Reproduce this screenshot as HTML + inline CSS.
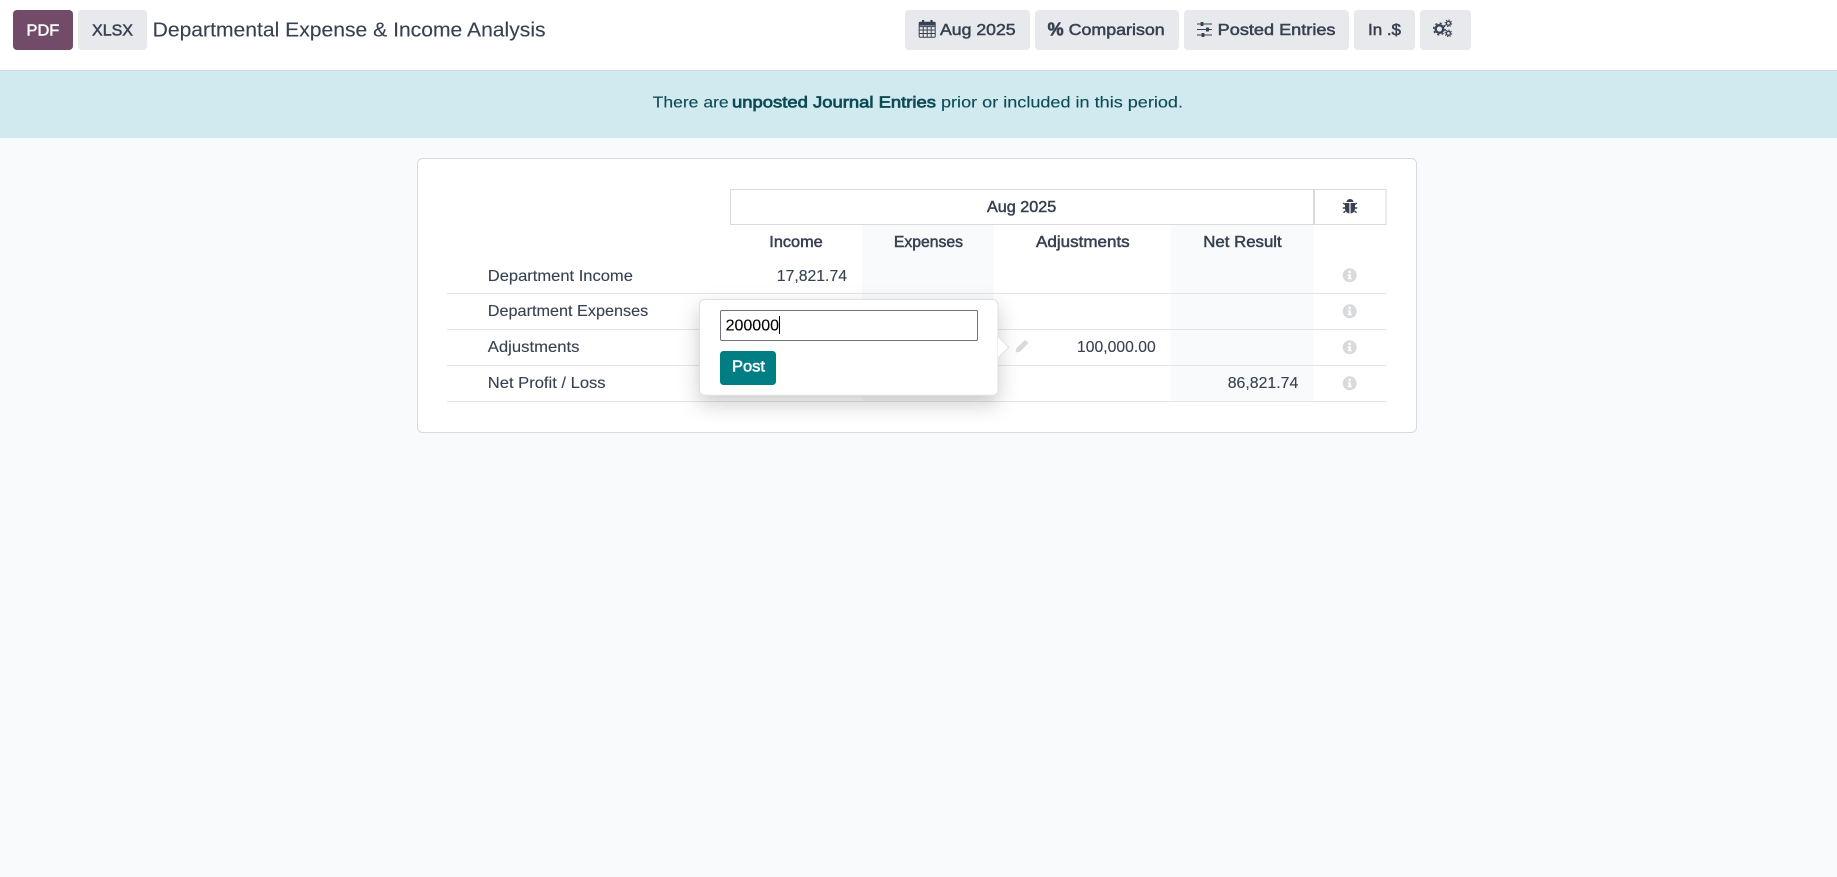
<!DOCTYPE html>
<html lang="en">
<head>
<meta charset="utf-8">
<title>Departmental Expense &amp; Income Analysis</title>
<style>
html,body{margin:0;padding:0;width:1837px;height:877px;overflow:hidden;background:#f9fafb}
svg{display:block}
text{font-family:"Liberation Sans",Arial,sans-serif;font-size:16px;fill:#374151;white-space:pre;stroke:#374151;stroke-width:.12px}
text.m{stroke:#374151;stroke-width:.5px}
text.a{fill:#0c4a55;stroke:#0c4a55}
</style>
</head>
<body>
<svg width="1837" height="877" viewBox="0 0 1837 877" xmlns="http://www.w3.org/2000/svg">
<defs>
<filter id="sh" x="-25%" y="-40%" width="150%" height="200%"><feDropShadow dx="0" dy="8" stdDeviation="10" flood-color="#000" flood-opacity=".2"/></filter>
</defs>
<rect width="1837" height="877" fill="#f9fafb"/>

<!-- control panel -->
<rect width="1837" height="70" fill="#fff"/>
<rect y="70" width="1837" height="1" fill="#d8dadd"/>
<rect x="13" y="10" width="60" height="40" rx="4" fill="#714b67"/>
<text x="26.5" y="35.500" textLength="32.8" lengthAdjust="spacingAndGlyphs" style="fill:#fff;stroke:#fff;stroke-width:.5px">PDF</text>
<rect x="78" y="10" width="69" height="40" rx="4" fill="#e7e9ed"/>
<text class="m" x="92" y="35.500" textLength="41" lengthAdjust="spacingAndGlyphs">XLSX</text>
<text x="152.6" y="36.500" textLength="393" lengthAdjust="spacingAndGlyphs" style="font-size:20.500px">Departmental Expense &amp; Income Analysis</text>

<rect x="905" y="10" width="125" height="40" rx="4" fill="#e7e9ed"/>
<g fill="none" stroke="#374151" stroke-width="1">
<rect x="919.2" y="22.2" width="16" height="15" rx="1"/>
<path d="M919.2 26.6h16M919.2 30h16M919.2 33.5h16M923.2 26.6v10.6M927.2 26.6v10.6M931.2 26.6v10.6"/>
</g>
<path d="M919 22h16.4v3.600H919z" fill="#374151"/>
<rect x="922" y="20" width="2.2" height="4" fill="#374151"/><rect x="930.4" y="20" width="2.2" height="4" fill="#374151"/>
<text class="m" x="940" y="35" textLength="75.6" lengthAdjust="spacingAndGlyphs">Aug 2025</text>

<rect x="1035" y="10" width="144" height="40" rx="4" fill="#e7e9ed"/>
<text x="1047.6" y="35.5" textLength="16" lengthAdjust="spacingAndGlyphs" style="font-weight:700;font-size:18px;stroke-width:.6px">%</text>
<text class="m" x="1068.6" y="35" textLength="96.1" lengthAdjust="spacingAndGlyphs">Comparison</text>

<rect x="1184" y="10" width="165" height="40" rx="4" fill="#e7e9ed"/>
<path d="M1197 24h15M1197 29.5h15M1197 35h15" stroke="#374151" stroke-width="1.1"/>
<rect x="1200.5" y="22" width="3" height="4" rx=".6" fill="#374151"/><rect x="1206" y="27.5" width="3" height="4" rx=".6" fill="#374151"/><rect x="1201.5" y="33" width="3" height="4" rx=".6" fill="#374151"/>
<text class="m" x="1217.7" y="35" textLength="117.8" lengthAdjust="spacingAndGlyphs">Posted Entries</text>

<rect x="1354" y="10" width="61" height="40" rx="4" fill="#e7e9ed"/>
<text class="m" x="1368" y="35" textLength="33" lengthAdjust="spacingAndGlyphs">In .$</text>

<rect x="1420" y="10" width="51" height="40" rx="4" fill="#e7e9ed"/>
<g fill="none" stroke="#374151">
<circle cx="1439.4" cy="29" r="3.800" stroke-width="2.400"/>
<circle cx="1439.4" cy="29" r="5.800" stroke-width="1.400" stroke-dasharray="2.200 2.360"/>
<circle cx="1448.4" cy="23.3" r="2" stroke-width="1.300"/>
<circle cx="1448.4" cy="23.3" r="3.300" stroke-width="1" stroke-dasharray="1.300 1.290"/>
<circle cx="1448.4" cy="33.3" r="2" stroke-width="1.300"/>
<circle cx="1448.4" cy="33.3" r="3.300" stroke-width="1" stroke-dasharray="1.300 1.290"/>
</g>

<!-- alert -->
<rect y="71" width="1837" height="67" fill="#d0eaf0"/>
<text class="a" x="652.6" y="107.500" textLength="76.1" lengthAdjust="spacingAndGlyphs">There are</text>
<text class="a" x="732" y="107.500" textLength="204" lengthAdjust="spacingAndGlyphs" style="stroke-width:.7px">unposted Journal Entries</text>
<text class="a" x="941" y="107.500" textLength="242" lengthAdjust="spacingAndGlyphs">prior or included in this period.</text>

<!-- card -->
<rect x="417.5" y="158.5" width="999" height="274" rx="5" fill="#fff" stroke="#d8dadd"/>

<!-- bands -->
<rect x="862" y="225" width="132" height="176" fill="#f9fafb"/>
<rect x="1171" y="225" width="143" height="176" fill="#f9fafb"/>

<!-- header boxes -->
<rect x="730.5" y="189.5" width="583" height="35" fill="#fff" stroke="#d8dadd"/>
<rect x="1314.5" y="189.5" width="71.5" height="35" fill="#fff" stroke="#d8dadd"/>
<text class="m" x="987" y="212" textLength="69.3" lengthAdjust="spacingAndGlyphs">Aug 2025</text>
<g fill="#374151">
<path d="M1346.500 202a3.500 3 0 0 1 7 0z"/>
<path d="M1345 203h4.400v10.500c-2.600-.2-4.400-2.400-4.400-5.200zM1350.600 203h4.400v5.300c0 2.800-1.800 5-4.400 5.200z"/>
<path d="M1345 204.500l-1.800-1.500M1355 204.500l1.800-1.500M1345 208h-2.200M1355 208h2.200M1345.500 211l-2 1.700M1354.500 211l2 1.700" stroke="#374151" stroke-width="1.400" fill="none"/>
</g>

<text class="m" x="769.3" y="246.800" textLength="53.400" lengthAdjust="spacingAndGlyphs">Income</text>
<text class="m" x="893.900" y="246.800" textLength="69.100" lengthAdjust="spacingAndGlyphs">Expenses</text>
<text class="m" x="1036" y="246.800" textLength="93.700" lengthAdjust="spacingAndGlyphs">Adjustments</text>
<text class="m" x="1203.300" y="246.800" textLength="78.400" lengthAdjust="spacingAndGlyphs">Net Result</text>

<!-- rows -->
<g fill="#e3e5e8">
<rect x="447" y="293" width="939" height="1"/>
<rect x="447" y="329" width="939" height="1"/>
<rect x="447" y="365" width="939" height="1"/>
<rect x="447" y="401" width="939" height="1"/>
</g>
<text x="487.800" y="281" textLength="145.100" lengthAdjust="spacingAndGlyphs">Department Income</text>
<text x="487.800" y="316.200" textLength="160.500" lengthAdjust="spacingAndGlyphs">Department Expenses</text>
<text x="487.800" y="352" textLength="91.700" lengthAdjust="spacingAndGlyphs">Adjustments</text>
<text x="487.800" y="388" textLength="117.800" lengthAdjust="spacingAndGlyphs">Net Profit / Loss</text>
<text x="776.800" y="281" textLength="70.200" lengthAdjust="spacingAndGlyphs">17,821.74</text>
<text x="1077" y="352" textLength="78.700" lengthAdjust="spacingAndGlyphs">100,000.00</text>
<text x="1227.700" y="388" textLength="70.600" lengthAdjust="spacingAndGlyphs">86,821.74</text>

<!-- info icons -->
<g>
<g transform="translate(1349.700 275.300)"><circle r="7" fill="#d8dadd"/><rect x="-1.300" y="-4.500" width="2.600" height="2.300" fill="#fff"/><path d="M-2-1h3.200v3.600h.9v1.400H-2v-1.400h.9V.4H-2z" fill="#fff"/></g>
<g transform="translate(1349.700 311.300)"><circle r="7" fill="#d8dadd"/><rect x="-1.300" y="-4.500" width="2.600" height="2.300" fill="#fff"/><path d="M-2-1h3.200v3.600h.9v1.400H-2v-1.400h.9V.4H-2z" fill="#fff"/></g>
<g transform="translate(1349.700 347.300)"><circle r="7" fill="#d8dadd"/><rect x="-1.300" y="-4.500" width="2.600" height="2.300" fill="#fff"/><path d="M-2-1h3.200v3.600h.9v1.400H-2v-1.400h.9V.4H-2z" fill="#fff"/></g>
<g transform="translate(1349.700 383.300)"><circle r="7" fill="#d8dadd"/><rect x="-1.300" y="-4.500" width="2.600" height="2.300" fill="#fff"/><path d="M-2-1h3.200v3.600h.9v1.400H-2v-1.400h.9V.4H-2z" fill="#fff"/></g>
</g>

<!-- pencil -->
<path d="M1015.500 352.500l1-4.200 8.600-8.600 3.400 3.400-8.600 8.600z" fill="#d8dadd"/>

<!-- popover -->
<rect x="699.500" y="299.500" width="298.500" height="95.800" rx="5" fill="#fff" stroke="#dcdfe3" filter="url(#sh)"/>
<path d="M998 336.700l11 10.600-11 10.600" fill="#fff" stroke="#dcdfe3"/>
<rect x="720.500" y="310.500" width="257" height="30" rx="1.500" fill="#fff" stroke="#6f7378"/>
<text x="725.600" y="330.300" textLength="53.400" lengthAdjust="spacingAndGlyphs" style="fill:#000;stroke:#000">200000</text>
<rect x="779" y="316" width="1" height="18" fill="#000"/>
<rect x="720" y="351" width="56" height="34" rx="3.500" fill="#017e84"/>
<text x="732" y="371.500" textLength="33" lengthAdjust="spacingAndGlyphs" style="fill:#fff;stroke:#fff;stroke-width:.5px">Post</text>
</svg>
</body>
</html>
